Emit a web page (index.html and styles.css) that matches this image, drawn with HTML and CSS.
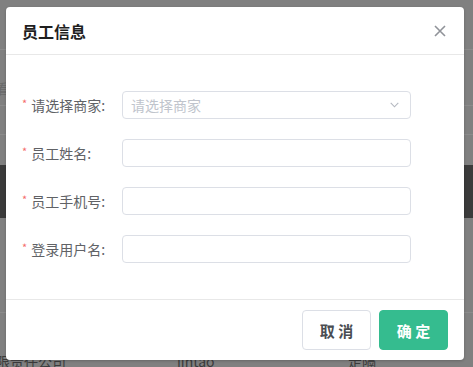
FILE: index.html
```html
<!DOCTYPE html>
<html lang="zh">
<head>
<meta charset="utf-8">
<link rel="stylesheet" href="styles.css">
</head>
<body>
<div class="page">
  <div class="bg-top"></div>
  <div class="bg-line"></div>
  <div class="bg-row bg-row-a"><span class="bg-text">看</span></div>
  <div class="bg-line"></div>
  <div class="bg-row bg-row-b"></div>
  <div class="bg-line"></div>
  <div class="bg-row bg-row-c"></div>
  <div class="bg-dark"></div>
  <div class="bg-row bg-row-d"></div>
  <div class="bg-line"></div>
  <div class="bg-row bg-row-e"></div>
  <div class="bg-cells">
    <span class="cell c1">限责任公司</span>
    <span class="cell c2">jintao</span>
    <span class="cell c3">走隔</span>
  </div>
</div>

<div class="modal">
  <div class="modal-header">
    <span class="modal-title">员工信息</span>
    <svg class="close" width="12" height="12" viewBox="0 0 12 12">
      <path d="M1 1 L11 11 M11 1 L1 11" stroke="#909399" stroke-width="1.6" fill="none"/>
    </svg>
  </div>
  <div class="modal-body">
    <div class="form-row">
      <label class="label"><span class="star">*</span>请选择商家:</label>
      <div class="input select">
        <span class="placeholder">请选择商家</span>
        <svg class="chev" width="9" height="6" viewBox="0 0 9 6">
          <path d="M0.7 0.8 L4.5 4.8 L8.3 0.8" stroke="#b4b8c0" stroke-width="1.1" fill="none"/>
        </svg>
      </div>
    </div>
    <div class="form-row">
      <label class="label"><span class="star">*</span>员工姓名:</label>
      <div class="input"></div>
    </div>
    <div class="form-row">
      <label class="label"><span class="star">*</span>员工手机号:</label>
      <div class="input"></div>
    </div>
    <div class="form-row">
      <label class="label"><span class="star">*</span>登录用户名:</label>
      <div class="input"></div>
    </div>
  </div>
  <div class="modal-footer">
    <button class="btn btn-cancel">取 消</button>
    <button class="btn btn-ok">确 定</button>
  </div>
</div>
</body>
</html>
```

FILE: styles.css
```css
* { box-sizing: border-box; }
html, body {
  margin: 0;
  padding: 0;
  width: 473px;
  height: 367px;
  overflow: hidden;
  background: #808080;
  font-family: "Noto Sans CJK SC", "Noto Sans", sans-serif;
}
.page {
  position: relative;
  width: 473px;
  height: 367px;
  display: flex;
  flex-direction: column;
  overflow: hidden;
}
.page > * { flex-shrink: 0; }
.bg-top { height: 49px; }
.bg-line { height: 1px; background: #8b8b8b; }
.bg-row-a { height: 55px; position: relative; }
.bg-text {
  position: absolute;
  left: -4px;
  top: 28px;
  font-size: 14px;
  color: #6a6a6a;
}
.bg-row-b { height: 28px; }
.bg-row-c { height: 30px; }
.bg-dark { height: 53px; background: #3b3b3b; }
.bg-row-d { height: 94px; }
.bg-row-e { height: 38px; }
.bg-cells {
  display: flex;
  align-items: center;
  height: 20px;
  font-size: 14px;
  color: #3c3c3c;
  line-height: 20px;
}
.cell { white-space: nowrap; }
.c1 { margin-left: -4px; width: 181px; }
.c2 { width: 171px; }

.modal {
  position: absolute;
  left: 6px;
  top: 7px;
  width: 458px;
  height: 353px;
  background: #fff;
  border-radius: 4px;
  display: flex;
  flex-direction: column;
  box-shadow: 0 1px 3px rgba(0,0,0,0.2);
}
.modal-header {
  height: 48px;
  padding: 0 18px 0 16px;
  border-bottom: 1px solid #e8e8e8;
  display: flex;
  align-items: center;
  justify-content: space-between;
}
.modal-title {
  font-size: 16px;
  font-weight: 700;
  color: #1f1f1f;
}
.close { display: block; }
.modal-body {
  padding: 36px 0 36px 16px;
  display: flex;
  flex-direction: column;
  gap: 20px;
  border-bottom: 1px solid #e8e8e8;
}
.form-row {
  display: flex;
  align-items: center;
  height: 28px;
}
.label {
  width: 100px;
  font-size: 14px;
  color: #606266;
  display: flex;
  align-items: center;
  white-space: nowrap;
}
.star {
  color: #f56c6c;
  font-size: 11px;
  margin-right: 4px;
  position: relative;
  top: -2px;
}
.input {
  width: 289px;
  height: 28px;
  border: 1px solid #dcdfe6;
  border-radius: 4px;
  background: #fff;
}
.select {
  display: flex;
  align-items: center;
  justify-content: space-between;
  padding: 0 11px 0 8px;
}
.placeholder {
  font-size: 14px;
  color: #c0c4cc;
}
.chev { display: block; }
.modal-footer {
  flex: 1;
  display: flex;
  justify-content: flex-end;
  align-items: flex-start;
  padding: 10px 16px 0 0;
  gap: 8px;
}
.btn {
  width: 69px;
  height: 40px;
  border-radius: 4px;
  font-family: "Noto Sans CJK SC", sans-serif;
  font-size: 15px;
  font-weight: 700;
  padding: 0;
  cursor: pointer;
}
.btn-cancel {
  background: #fff;
  border: 1px solid #dcdfe6;
  color: #4a4d52;
}
.btn-ok {
  background: #35bc8f;
  border: 1px solid #35bc8f;
  color: #fff;
}
```
